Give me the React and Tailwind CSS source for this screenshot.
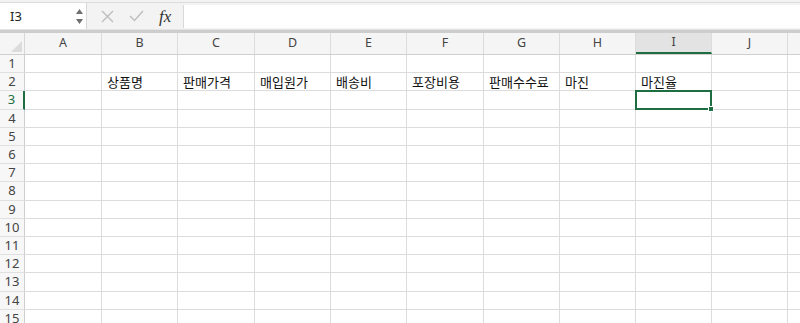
import React from "react";

const cols = ["A", "B", "C", "D", "E", "F", "G", "H", "I", "J", ""];
const widths = [77, 76, 77, 76, 76, 77, 76, 76, 76, 76, 40];
const heights = [18, 18, 19, 18, 18, 18, 18, 19, 18, 18, 18, 18, 19, 18, 18];
const labels = {
  1: "상품명",
  2: "판매가격",
  3: "매입원가",
  4: "배송비",
  5: "포장비용",
  6: "판매수수료",
  7: "마진",
  8: "마진율",
};

export default function App() {
  return (
    <div
      className="w-[800px] h-[323px] overflow-hidden bg-white text-[#222]"
      style={{ fontFamily: '"Noto Sans", "Noto Sans CJK KR", sans-serif' }}
    >
      {/* top strip */}
      <div className="h-[3px] bg-[#f3f3f3] border-b border-[#dcdcdc]" />
      {/* formula bar */}
      <div className="h-[26px] flex bg-[#f3f3f3]">
        <div className="w-[87px] bg-white border-r border-[#d8d8d8] flex items-center pl-[10px] pr-[3px] relative">
          <span className="text-[13px] leading-none">I3</span>
          <div className="ml-auto flex flex-col items-center gap-[5px]">
            <svg width="7" height="5" viewBox="0 0 7 5">
              <path d="M3.5 0 L7 5 L0 5 Z" fill="#6f6f6f" />
            </svg>
            <svg width="7" height="5" viewBox="0 0 7 5">
              <path d="M0 0 L7 0 L3.5 5 Z" fill="#6f6f6f" />
            </svg>
          </div>
        </div>
        <div className="w-[96px] flex items-center">
          <svg className="ml-[14px]" width="13" height="13" viewBox="0 0 13 13">
            <path d="M1 1 L12 12 M12 1 L1 12" stroke="#bdbdbd" strokeWidth="1.4" />
          </svg>
          <svg className="ml-[15px]" width="15" height="12" viewBox="0 0 15 12">
            <path d="M1 6 L5.5 10.5 L14 1" stroke="#bdbdbd" strokeWidth="1.4" fill="none" />
          </svg>
          <span
            className="ml-[15px] text-[17px] italic leading-none text-[#333]"
            style={{ fontFamily: '"Liberation Serif", "DejaVu Serif", serif' }}
          >
            fx
          </span>
        </div>
        <div className="flex-1 bg-white border-l border-[#d8d8d8] mt-[2px] mb-[1px]" />
      </div>
      {/* separator */}
      <div className="h-[1px] bg-[#e4e4e4]" />
      <div className="h-[3px] bg-[#cdcdcd]" />
      {/* column header */}
      <div className="flex h-[22px] bg-[#f5f5f5] border-b border-[#cfcfcf]">
        <div className="w-[25px] shrink-0 border-r border-[#d8d8d8] relative">
          <svg className="absolute right-[2px] bottom-[2px]" width="11" height="11" viewBox="0 0 11 11">
            <path d="M11 0 L11 11 L0 11 Z" fill="#dcdcdc" />
          </svg>
        </div>
        {cols.map((c, i) => (
          <div
            key={i}
            style={{ width: widths[i] }}
            className={`shrink-0 flex items-center justify-center text-[12.5px] text-[#444] border-r border-[#dcdcdc] ${
              c === "I" ? "bg-[#e3e3e3] border-b-2 border-b-[#1e6e42]" : ""
            }`}
          >
            {c}
          </div>
        ))}
      </div>
      {/* rows */}
      {heights.map((h, r) => {
        const rowNum = r + 1;
        const sel = rowNum === 3;
        return (
          <div key={r} className="flex" style={{ height: h }}>
            <div
              className={`w-[25px] shrink-0 flex items-center justify-center text-[13px] bg-[#f7f7f7] border-b border-[#e0e0e0] ${
                sel ? "text-[#1e6e42] border-r-2 border-r-[#1e6e42]" : "text-[#444] border-r border-r-[#cfcfcf]"
              }`}
            >
              {rowNum}
            </div>
            {cols.map((c, i) => (
              <div
                key={i}
                style={{ width: widths[i] }}
                className="shrink-0 border-r border-b border-[#dcdcdc] relative flex items-center"
              >
                {rowNum === 2 && labels[i] && (
                  <span
                    className="pl-[5px] text-[13px] leading-none text-[#111] whitespace-nowrap"
                    style={{ fontFamily: '"Noto Sans CJK KR", "Noto Sans", sans-serif' }}
                  >
                    {labels[i]}
                  </span>
                )}
                {sel && c === "I" && (
                  <div className="absolute left-[-1px] top-[-1px] w-[77px] h-[20px] border-2 border-[#1e6e42] z-10">
                    <div className="absolute right-[-4px] bottom-[-4px] w-[6px] h-[6px] bg-[#1e6e42] border border-white" />
                  </div>
                )}
              </div>
            ))}
          </div>
        );
      })}
    </div>
  );
}
